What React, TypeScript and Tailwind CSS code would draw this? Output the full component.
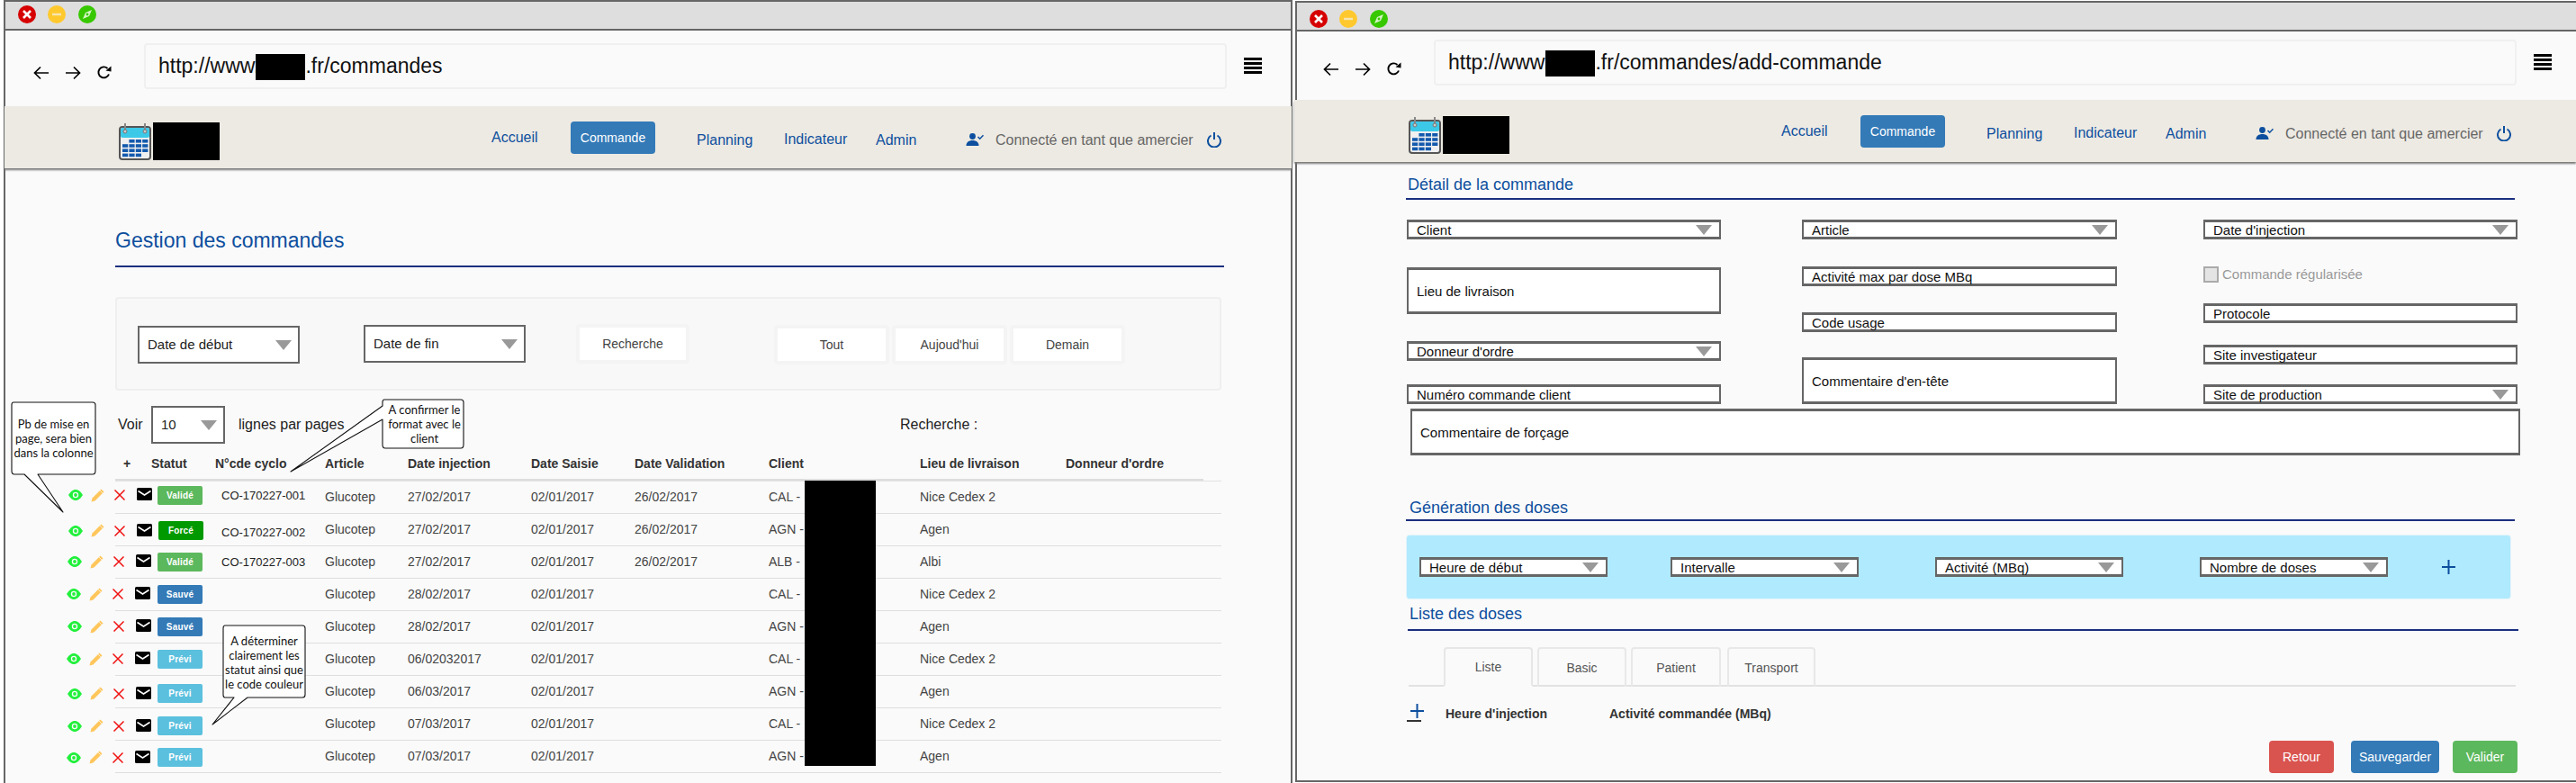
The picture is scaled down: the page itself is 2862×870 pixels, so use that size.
import React from "react";

const sans = "[font-family:'Liberation_Sans',Arial,sans-serif]";

function Tri({ w = 18, h = 11 }: { w?: number; h?: number }) {
  return (
    <svg width={w} height={h} viewBox="0 0 18 11" preserveAspectRatio="none" className="block shrink-0">
      <path d="M0 0H18L9 11Z" fill="#999" />
    </svg>
  );
}

function WinButtons() {
  return (
    <div className="flex items-center">
      <svg width="20" height="20" viewBox="0 0 20 20" className="shrink-0">
        <circle cx="10" cy="10" r="10" fill="#d60000" />
        <path d="M6 6l8 8M14 6l-8 8" stroke="#fff" strokeWidth="2.6" />
      </svg>
      <svg width="20" height="20" viewBox="0 0 20 20" className="ml-[13px] shrink-0">
        <circle cx="10" cy="10" r="10" fill="#ffc92e" />
        <path d="M5 10h10" stroke="#f5e6b0" strokeWidth="2.4" />
      </svg>
      <svg width="20" height="20" viewBox="0 0 20 20" className="ml-[14px] shrink-0">
        <circle cx="10" cy="10" r="10" fill="#37c800" />
        <path d="M15 5l-7 3-3 7 7-3z" fill="#d6f5c8" />
        <circle cx="10" cy="10" r="1.4" fill="#37c800" />
      </svg>
    </div>
  );
}

function ToolIcons() {
  return (
    <div className="flex items-center">
      <svg width="18" height="16" viewBox="0 0 18 16" fill="none" stroke="#000" strokeWidth="1.7">
        <path d="M17 8H2M8 1.5L1.5 8 8 14.5" />
      </svg>
      <svg width="18" height="16" viewBox="0 0 18 16" fill="none" stroke="#000" strokeWidth="1.7" className="ml-[17px]">
        <path d="M1 8h15M10 1.5L16.5 8 10 14.5" />
      </svg>
      <svg width="17" height="17" viewBox="0 0 17 17" className="ml-[17px]">
        <path d="M14 10.5A6 6 0 1 1 12.5 4" fill="none" stroke="#000" strokeWidth="1.9" />
        <path d="M10.5 6.5L16.5 1.5V7.5Z" fill="#000" />
      </svg>
    </div>
  );
}

function Hamburger() {
  return (
    <div className="flex w-[20px] flex-col gap-[2.5px]">
      <span className="h-[2.5px] bg-black" />
      <span className="h-[2.5px] bg-black" />
      <span className="h-[2.5px] bg-black" />
      <span className="h-[2.5px] bg-black" />
    </div>
  );
}

function CalendarLogo() {
  const cells = [
    [0, 1, 1, 1],
    [1, 1, 1, 1],
    [1, 1, 1, 1],
    [1, 1, 1, 0],
  ];
  return (
    <svg width="36" height="42" viewBox="0 0 36 42" className="shrink-0">
      <rect x="1" y="5" width="34" height="36" rx="3" fill="#f0f0f0" stroke="#555" strokeWidth="2" />
      <rect x="2" y="6" width="32" height="11" rx="2" fill="#3cc9e8" />
      <path d="M7 1v9M29 1v9" stroke="#888" strokeWidth="2" />
      <circle cx="7" cy="10" r="2" fill="#ccc" stroke="#777" />
      <circle cx="29" cy="10" r="2" fill="#ccc" stroke="#777" />
      {cells.map((r, y) =>
        r.map((on, x) =>
          on ? <rect key={`${x}-${y}`} x={4 + x * 7.4} y={19 + y * 5.2} width="6.2" height="3.6" fill="#1259ad" /> : null
        )
      )}
    </svg>
  );
}

function PowerIcon() {
  return (
    <svg width="16" height="17" viewBox="0 0 16 17" fill="none" stroke="#0d4f9e" strokeWidth="2">
      <path d="M4.5 3.500A7 7 0 1 0 11.500 3.500" />
      <path d="M8 0v8" />
    </svg>
  );
}

function UserCheck() {
  return (
    <svg width="20" height="14" viewBox="0 0 20 14" fill="#0d4f9e">
      <circle cx="7.500" cy="3.500" r="3.400" />
      <path d="M0.500 14c0-4 3-6 7-6s7 2 7 6z" />
      <path d="M13.500 4l2.200 2.200 3.800-4" fill="none" stroke="#0d4f9e" strokeWidth="1.500" />
    </svg>
  );
}

function NavBar({ className }: { className: string }) {
  return (
    <div className={`flex h-[69px] items-start bg-[#edeae3] shadow-[0_2px_2px_#777] relative ${className}`}>
      <div className="ml-[127px] mt-[18px] flex items-start">
        <CalendarLogo />
        <div className="ml-[2px] h-[42px] w-[74px] bg-black" />
      </div>
      <span className="ml-[302px] mt-[25px] w-[52px] text-[16px] leading-[20px] text-[#0d4f9e]">Accueil</span>
      <span className="ml-[36px] mt-[17px] flex h-[36px] w-[94px] items-center justify-center rounded-[4px] bg-[#337ab7] text-[14px] text-white">Commande</span>
      <span className="ml-[46px] mt-[28px] w-[62px] text-[16px] leading-[20px] text-[#0d4f9e]">Planning</span>
      <span className="ml-[35px] mt-[27px] w-[71px] text-[16px] leading-[20px] text-[#0d4f9e]">Indicateur</span>
      <span className="ml-[31px] mt-[28px] w-[45px] text-[16px] leading-[20px] text-[#0d4f9e]">Admin</span>
      <span className="ml-[55px] mt-[30px]"><UserCheck /></span>
      <span className="ml-[13px] mt-[28px] w-[221px] whitespace-nowrap text-[16px] leading-[20px] text-[#666]">Connecté en tant que amercier</span>
      <span className="ml-[14px] mt-[29px]"><PowerIcon /></span>
    </div>
  );
}

function Sel({ label, className }: { label: string; className: string }) {
  return (
    <div className={`flex items-center justify-between border-x-2 border-t-[3px] border-b-[3px] border-[#666] bg-white pl-[9px] text-[15px] leading-none text-[#111] ${className}`}>
      <span className="whitespace-nowrap">{label}</span>
      <span className="mr-[8px]"><Tri /></span>
    </div>
  );
}

function Inp({ label, className }: { label: string; className: string }) {
  return (
    <div className={`flex items-center border-x-2 border-t-[3px] border-b-[3px] border-[#666] bg-white pl-[9px] text-[15px] leading-none text-[#111] ${className}`}>
      <span className="whitespace-nowrap">{label}</span>
    </div>
  );
}

function BigSel({ label, className }: { label: string; className: string }) {
  return (
    <div className={`flex items-center justify-between border-[2px] border-[#666] bg-white pl-[9px] text-[15px] text-[#222] ${className}`}>
      <span className="whitespace-nowrap">{label}</span>
      <span className="mr-[7px]"><Tri /></span>
    </div>
  );
}

function FilterBtn({ label, className }: { label: string; className: string }) {
  return (
    <div className={`flex h-[44px] items-center justify-center rounded-[4px] border-[4px] border-[#f4f4f4] bg-white text-[14px] text-[#444] ${className}`}>
      {label}
    </div>
  );
}

type Row = {
  badge: string;
  color: string;
  code: string;
  inj: string;
  val: string;
  client: string;
  lieu: string;
  act: string;
  off: string;
  badgeMl: string;
  codeCls: string;
};

const rows: Row[] = [
  { badge: "Validé", color: "bg-[#5cb85c]", code: "CO-170227-001", inj: "27/02/2017", val: "26/02/2017", client: "CAL -", lieu: "Nice Cedex 2", act: "-ml-[52px]", off: "mb-[4px]", badgeMl: "ml-[6px]", codeCls: "mb-[3px]" },
  { badge: "Forcé", color: "bg-[#009900]", code: "CO-170227-002", inj: "27/02/2017", val: "26/02/2017", client: "AGN -", lieu: "Agen", act: "-ml-[52px]", off: "mt-[3px]", badgeMl: "ml-[7px]", codeCls: "mt-[7px]" },
  { badge: "Validé", color: "bg-[#5cb85c]", code: "CO-170227-003", inj: "27/02/2017", val: "26/02/2017", client: "ALB -", lieu: "Albi", act: "-ml-[53px]", off: "mt-0", badgeMl: "ml-[7px]", codeCls: "mt-[2px]" },
  { badge: "Sauvé", color: "bg-[#337ab7]", code: "", inj: "28/02/2017", val: "", client: "CAL -", lieu: "Nice Cedex 2", act: "-ml-[54px]", off: "mt-0", badgeMl: "ml-[8px]", codeCls: "" },
  { badge: "Sauvé", color: "bg-[#337ab7]", code: "", inj: "28/02/2017", val: "", client: "AGN -", lieu: "Agen", act: "-ml-[53px]", off: "mt-0", badgeMl: "ml-[7px]", codeCls: "" },
  { badge: "Prévi", color: "bg-[#5bc0de]", code: "", inj: "06/02032017", val: "", client: "CAL -", lieu: "Nice Cedex 2", act: "-ml-[54px]", off: "mt-0", badgeMl: "ml-[8px]", codeCls: "" },
  { badge: "Prévi", color: "bg-[#5bc0de]", code: "", inj: "06/03/2017", val: "", client: "AGN -", lieu: "Agen", act: "-ml-[53px]", off: "mt-[5px]", badgeMl: "ml-[7px]", codeCls: "" },
  { badge: "Prévi", color: "bg-[#5bc0de]", code: "", inj: "07/03/2017", val: "", client: "CAL -", lieu: "Nice Cedex 2", act: "-ml-[53px]", off: "mt-[5px]", badgeMl: "ml-[7px]", codeCls: "" },
  { badge: "Prévi", color: "bg-[#5bc0de]", code: "", inj: "07/03/2017", val: "", client: "AGN -", lieu: "Agen", act: "-ml-[54px]", off: "mt-[3px]", badgeMl: "ml-[8px]", codeCls: "" },
];

function Eye() {
  return (
    <svg width="16" height="12" viewBox="0 0 16 12" className="shrink-0">
      <path d="M0 6C3 1.300 5.500 0 8 0s5 1.300 8 6c-3 4.700-5.500 6-8 6s-5-1.300-8-6z" fill="#22f03c" />
      <circle cx="8" cy="6" r="3.200" fill="#fafafa" />
      <circle cx="8" cy="6" r="1.900" fill="#22f03c" />
    </svg>
  );
}

function Pencil() {
  return (
    <svg width="15" height="15" viewBox="0 0 15 15" className="ml-[9px] shrink-0">
      <path d="M11.500 0.500l3 3L4.500 13.500 0.500 14.500l1-4z" fill="#ffc65c" />
      <path d="M10 2l3 3" stroke="#fafafa" strokeWidth="0.700" />
    </svg>
  );
}

function Cross() {
  return (
    <svg width="12" height="12" viewBox="0 0 12 12" className="ml-[11px] shrink-0">
      <path d="M0.500 0.500l11 11M11.500 0.500l-11 11" stroke="#f01010" strokeWidth="1.500" />
    </svg>
  );
}

function Mail() {
  return (
    <svg width="17" height="14" viewBox="0 0 17 14" className="-mt-[2px] ml-[13px] shrink-0">
      <rect width="17" height="14" rx="1.500" fill="#000" />
      <path d="M1.500 3.500L8.500 8 15.500 3.500" fill="none" stroke="#fff" strokeWidth="1.500" />
    </svg>
  );
}

function Bubble({ d, svgCls, w, h, lines, textCls }: { d: string; svgCls: string; w: number; h: number; lines: string[]; textCls: string }) {
  return (
    <>
      <svg width={w} height={h} viewBox={`0 0 ${w} ${h}`} className={`absolute ${svgCls}`}>
        <path d={d} fill="#fff" stroke="#111" strokeWidth="1.100" strokeLinejoin="round" />
      </svg>
      <div className={`absolute text-center text-[13px] leading-[16px] text-[#111] [font-family:'Lato',sans-serif] ${textCls}`}>
        {lines.map((l) => (
          <div key={l} className="whitespace-nowrap">{l}</div>
        ))}
      </div>
    </>
  );
}

function LeftWindow() {
  return (
    <div className={`relative ml-[4px] h-[870px] w-[1432px] shrink-0 border-x-2 border-[#666] bg-[#fafafa] ${sans}`}>
      <div className="h-[34px] border-y-2 border-[#666] bg-[#dedede] pl-[14px] pt-[4px]">
        <WinButtons />
      </div>
      <div className="flex h-[84px] items-start">
        <div className="ml-[31px] mt-[38px]"><ToolIcons /></div>
        <div className="ml-[36px] mt-[14px] flex h-[51px] w-[1203px] items-start rounded-[4px] border-2 border-[#f0f0f0] bg-[#fafafa] pl-[14px] pt-[5px] text-[23px] leading-[36px] text-[#111]">
          <span>http://www.</span>
          <span className="-ml-[4px] mt-[5px] h-[29px] w-[55px] bg-black" />
          <span>.fr/commandes</span>
        </div>
        <div className="ml-[19px] mt-[30px]"><Hamburger /></div>
      </div>
      <NavBar className="-mx-[1px]" />
      <div className="ml-[122px] mr-[77px]">
        <div className="mt-[66px] text-[23px] leading-[28px] text-[#0d4f9e]">Gestion des commandes</div>
        <div className="-mr-[3px] mt-[14px] h-[2px] bg-[#1a2f7f]" />
        <div className="mt-[33px] flex h-[104px] items-start rounded-[4px] border-2 border-[#efefef] bg-[#f8f8f8]">
          <BigSel label="Date de début" className="ml-[23px] mt-[30px] h-[42px] w-[180px]" />
          <BigSel label="Date de fin" className="ml-[71px] mt-[29px] h-[42px] w-[180px]" />
          <FilterBtn label="Recherche" className="ml-[56px] mt-[28px] w-[126px]" />
          <FilterBtn label="Tout" className="ml-[94px] mt-[29px] w-[128px]" />
          <FilterBtn label="Aujoud'hui" className="ml-[3px] mt-[29px] w-[128px]" />
          <FilterBtn label="Demain" className="ml-[3px] mt-[29px] w-[128px]" />
        </div>
        <div className="mt-[17px] flex h-[42px] items-center text-[16px] text-[#222]">
          <span className="ml-[3px] w-[37px]">Voir</span>
          <BigSel label="10" className="h-[42px] w-[82px]" />
          <span className="ml-[15px] w-[735px]">lignes par pages</span>
          <span>Recherche :</span>
        </div>
        <div className="mt-[5px] flex h-[34px] items-center text-[14px] font-bold text-[#333]">
          <span className="ml-[9px] w-[31px]">+</span>
          <span className="w-[71px]">Statut</span>
          <span className="w-[122px]">N°cde cyclo</span>
          <span className="w-[92px]">Article</span>
          <span className="w-[137px]">Date injection</span>
          <span className="w-[115px]">Date Saisie</span>
          <span className="w-[149px]">Date Validation</span>
          <span className="w-[168px]">Client</span>
          <span className="w-[162px]">Lieu de livraison</span>
          <span>Donneur d'ordre</span>
        </div>
        <div className="h-[2px] w-[1209px] bg-[#dddddd]" />
        <div className="h-[1px] bg-[#e2e2e2]" />
        {rows.map((r, i) => (
          <div key={i} className="flex h-[36px] items-center border-b border-[#dedede] pb-[1px] text-[14px] text-[#444]">
            <div className={`w-[97px] shrink-0 ${r.off}`}>
              <div className={`flex w-max items-center ${r.act}`}>
                <Eye />
                <Pencil />
                <Cross />
                <Mail />
                <span className={`flex h-[21px] w-[50px] shrink-0 items-center justify-center rounded-[2px] text-[10px] font-bold tracking-[0.2px] text-white ${r.color} ${r.badgeMl}`}>{r.badge}</span>
              </div>
            </div>
            <span className={`ml-[21px] w-[115px] shrink-0 text-[13px] text-[#222] ${r.codeCls}`}>{r.code}</span>
            <span className="w-[92px] shrink-0">Glucotep</span>
            <span className="w-[137px] shrink-0">{r.inj}</span>
            <span className="w-[115px] shrink-0">02/01/2017</span>
            <span className="w-[149px] shrink-0">{r.val}</span>
            <span className="w-[168px] shrink-0">{r.client}</span>
            <span>{r.lieu}</span>
          </div>
        ))}
      </div>
      <div className="absolute left-[888px] top-[534px] h-[317px] w-[79px] bg-black" />
      <Bubble
        d="M3 1H91Q94 1 94 4V77Q94 81 91 81H30L58 123 15 81H4Q1 81 1 77V4Q1 1 3 1Z"
        svgCls="left-[6px] top-[446px]"
        w={95}
        h={124}
        lines={["Pb de mise en", "page, sera bien", "dans la colonne"]}
        textCls="left-[7px] top-[463px] w-[93px]"
      />
      <Bubble
        d="M105 1H190Q193 1 193 4V51Q193 55 190 55H106Q103 55 103 51V23L1 81 103 8V4Q103 1 105 1Z"
        svgCls="left-[316px] top-[443px]"
        w={194}
        h={82}
        lines={["A confirmer le", "format avec le", "client"]}
        textCls="left-[420px] top-[447px] w-[91px]"
      />
      <Bubble
        d="M15 1H101Q104 1 104 4V78Q104 81 101 81H40L1 111 25 81H15Q13 81 13 78V4Q13 1 15 1Z"
        svgCls="left-[229px] top-[694px]"
        w={105}
        h={112}
        lines={["A déterminer", "clairement les", "statut ainsi que", "le code couleur"]}
        textCls="left-[242px] top-[704px] w-[91px]"
      />
    </div>
  );
}

function Tab({ label, active, className }: { label: string; active?: boolean; className: string }) {
  return (
    <div className={`flex h-[44px] items-center justify-center rounded-t-[4px] border-2 text-[14px] text-[#555] ${active ? "border-[#e6e6e6] border-b-[#fafafa] bg-[#fafafa]" : "border-[#e8e8e8] border-b-0"} ${className}`}>
      {label}
    </div>
  );
}

function Plus() {
  return (
    <svg width="15" height="16" viewBox="0 0 15 16" className="block shrink-0">
      <path d="M7.500 0v16M0 8h15" stroke="#0d4f9e" strokeWidth="2" />
    </svg>
  );
}

function RightWindow() {
  return (
    <div className={`relative mt-[1px] h-[868px] w-[1423px] shrink-0 border-b-2 border-l-2 border-[#666] bg-[#fafafa] ${sans}`}>
      <div className="h-[34px] border-y-2 border-[#666] bg-[#dedede] pl-[14px] pt-[8px]">
        <WinButtons />
      </div>
      <div className="flex h-[76px] items-start">
        <div className="ml-[29px] mt-[33px]"><ToolIcons /></div>
        <div className="ml-[36px] mt-[9px] flex h-[51px] w-[1203px] items-start rounded-[4px] border-2 border-[#f0f0f0] bg-[#fafafa] pl-[14px] pt-[5px] text-[23px] leading-[36px] text-[#111]">
          <span>http://www.</span>
          <span className="-ml-[4px] mt-[5px] h-[29px] w-[55px] bg-black" />
          <span>.fr/commandes/add-commande</span>
        </div>
        <div className="ml-[19px] mt-[25px]"><Hamburger /></div>
      </div>
      <NavBar className="-ml-[3px]" />
      <div className="ml-[121px] mr-[60px]">
        <div className="ml-[2px] mt-[14px] text-[18px] leading-[22px] text-[#0d4f9e]">Détail de la commande</div>
        <div className="mt-[4px] h-[2px] w-[1232px] bg-[#1a2f7f]" />
        <div className="mt-[22px] flex items-start">
          <div className="ml-[1px] flex w-[349px] shrink-0 flex-col">
            <Sel label="Client" className="h-[22px]" />
            <Inp label="Lieu de livraison" className="mt-[31px] h-[52px]" />
            <Sel label="Donneur d'ordre" className="mt-[30px] h-[22px]" />
            <Inp label="Numéro commande client" className="mt-[26px] h-[22px]" />
          </div>
          <div className="ml-[90px] flex w-[350px] shrink-0 flex-col">
            <Sel label="Article" className="h-[22px]" />
            <Inp label="Activité max par dose MBq" className="mt-[30px] h-[22px]" />
            <Inp label="Code usage" className="mt-[29px] h-[22px]" />
            <Inp label="Commentaire d'en-tête" className="mt-[28px] h-[52px]" />
          </div>
          <div className="ml-[96px] flex w-[349px] shrink-0 flex-col">
            <Sel label="Date d'injection" className="h-[22px]" />
            <div className="mt-[30px] flex h-[18px] items-center text-[15px] text-[#999]">
              <span className="h-[18px] w-[17px] border-2 border-[#aaa] bg-[#e4e4e4]" />
              <span className="ml-[4px]">Commande régularisée</span>
            </div>
            <Inp label="Protocole" className="mt-[23px] h-[22px]" />
            <Inp label="Site investigateur" className="mt-[24px] h-[22px]" />
            <Sel label="Site de production" className="mt-[22px] h-[22px]" />
          </div>
        </div>
        <Inp label="Commentaire de forçage" className="ml-[5px] mt-[5px] h-[52px] w-[1233px]" />
        <div className="ml-[4px] mt-[47px] text-[18px] leading-[22px] text-[#0d4f9e]">Génération des doses</div>
        <div className="mt-[2px] h-[2px] w-[1232px] bg-[#1a2f7f]" />
        <div className="mt-[15px] flex h-[72px] w-[1228px] items-center rounded-[4px] border border-[#e4f3f9] bg-[#b0eaff] pl-[14px]">
          <Sel label="Heure de début" className="h-[22px] w-[209px]" />
          <Sel label="Intervalle" className="ml-[70px] h-[22px] w-[209px]" />
          <Sel label="Activité (MBq)" className="ml-[85px] h-[22px] w-[209px]" />
          <Sel label="Nombre de doses" className="ml-[85px] h-[22px] w-[209px]" />
          <span className="ml-[60px]"><Plus /></span>
        </div>
        <div className="ml-[4px] mt-[5px] text-[18px] leading-[22px] text-[#0d4f9e]">Liste des doses</div>
        <div className="ml-[2px] mt-[6px] h-[2px] w-[1234px] bg-[#1a2f7f]" />
        <div className="ml-[3px] mt-[18px] flex h-[44px] w-[1230px] items-start border-b-2 border-[#e2e2e2]">
          <Tab label="Liste" active className="ml-[39px] w-[99px]" />
          <Tab label="Basic" className="ml-[5px] w-[99px]" />
          <Tab label="Patient" className="ml-[5px] w-[100px]" />
          <Tab label="Transport" className="ml-[7px] w-[98px]" />
        </div>
        <div className="mt-[19px] flex items-start text-[14px] font-bold leading-[16px] text-[#333]">
          <div className="ml-[1px] flex w-[43px] flex-col">
            <span className="ml-[4px]"><Plus /></span>
            <span className="mt-[2px] h-[2px] w-[16px] bg-[#333]" />
          </div>
          <span className="mt-[3px] w-[182px]">Heure d'injection</span>
          <span className="mt-[3px]">Activité commandée (MBq)</span>
        </div>
        <div className="ml-[959px] mt-[21px] flex items-start text-[14px] text-white">
          <span className="flex h-[36px] w-[72px] items-center justify-center rounded-[4px] bg-[#d9534f]">Retour</span>
          <span className="ml-[19px] flex h-[36px] w-[98px] items-center justify-center rounded-[4px] bg-[#337ab7]">Sauvegarder</span>
          <span className="ml-[15px] flex h-[36px] w-[72px] items-center justify-center rounded-[4px] bg-[#5cb85c]">Valider</span>
        </div>
      </div>
    </div>
  );
}

export default function App() {
  return (
    <div className="flex h-[870px] w-[2862px] items-start overflow-hidden bg-white">
      <LeftWindow />
      <div className="w-[3px] shrink-0" />
      <RightWindow />
    </div>
  );
}
